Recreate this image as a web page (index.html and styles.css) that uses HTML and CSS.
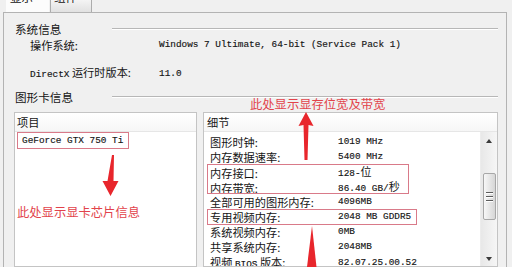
FILE: index.html
```html
<!DOCTYPE html>
<html lang="zh-CN">
<head>
<meta charset="utf-8">
<title>系统信息</title>
<link rel="stylesheet" href="styles.css">
</head>
<body>
<div class="tabs">
  <div class="tab active"><span>显示</span></div>
  <div class="tab inactive"><span>组件</span></div>
</div>
<div class="panel">
  <div class="gtitle g1"><span>系统信息</span></div>
  <div class="kv kv1"><span>操作系统:</span><span class="m">Windows 7 Ultimate, 64-bit (Service Pack 1)</span></div>
  <div class="kv kv2"><span><span class="m">DirectX</span> 运行时版本:</span><span class="m">11.0</span></div>
  <div class="gtitle g2"><span>图形卡信息</span></div>
  <div class="lists">
    <div class="list left">
      <div class="lhead">项目</div>
      <div class="lbody">
        <div class="item m">GeForce GTX 750 Ti</div>
      </div>
    </div>
    <div class="list right">
      <div class="lhead">细节</div>
      <div class="rbody">
        <div class="rows">
          <div class="drow"><span>图形时钟:</span><span class="m">1019 MHz</span></div>
          <div class="drow"><span>内存数据速率:</span><span class="m">5400 MHz</span></div>
          <div class="hl hl1">
            <div class="drow"><span>内存接口:</span><span class="m">128-<span class="c">位</span></span></div>
            <div class="drow"><span>内存带宽:</span><span class="m">86.40 GB/<span class="c">秒</span></span></div>
          </div>
          <div class="drow"><span>全部可用的图形内存:</span><span class="m">4096MB</span></div>
          <div class="hl hl2">
            <div class="drow"><span>专用视频内存:</span><span class="m">2048 MB GDDR5</span></div>
          </div>
          <div class="drow"><span>系统视频内存:</span><span class="m">0MB</span></div>
          <div class="drow"><span>共享系统内存:</span><span class="m">2048MB</span></div>
          <div class="drow"><span>视频 <span class="m">BIOS</span> 版本:</span><span class="m">82.07.25.00.52</span></div>
        </div>
        <div class="sb">
          <div class="sbbtn"><i class="tri up"></i></div>
          <div class="thumb"><i></i><i></i><i></i></div>
          <div class="sbbtn down"><i class="tri dn"></i></div>
        </div>
      </div>
    </div>
  </div>
</div>
<div class="note note-top">此处显示显存位宽及带宽</div>
<div class="note note-left">此处显示显卡芯片信息</div>
<svg class="arrows" width="512" height="267" viewBox="0 0 512 267">
  <polygon points="306,112 313.5,126 308.5,125 307.5,160 304.5,160 303.5,125 298.5,126"/>
  <polygon points="112,155 114,155 113.5,181 118.5,181 110.5,196 102.5,181 107.5,181"/>
  <polygon points="312,226 316.5,267 307,267"/>
</svg>
</body>
</html>
```
FILE: styles.css
```css
html, body {
  margin: 0;
  padding: 0;
}
body {
  width: 512px;
  height: 267px;
  overflow: hidden;
  position: relative;
  background: #f0f0f0;
  font-family: "Noto Sans CJK SC", sans-serif;
  font-size: 11.2px;
  color: #141414;
}
.m {
  font-family: "Liberation Mono", "Noto Sans CJK SC", monospace;
  font-size: 9.4px;
  -webkit-text-stroke: 0.15px #141414;
}
.c {
  font-family: "Noto Sans CJK SC", sans-serif;
  font-size: 11px;
  -webkit-text-stroke: 0;
}
.tabs {
  display: flex;
  height: 12px;
  overflow: hidden;
  padding-left: 6px;
}
.tab {
  box-sizing: border-box;
  line-height: 14px;
  font-size: 11.5px;
}
.tab span {
  display: block;
  margin-top: -10px;
}
.tab.active {
  width: 43px;
  padding-left: 4px;
  background: #fcfcfc;
}
.tab.inactive {
  width: 42px;
  margin-left: 1px;
  padding-left: 3px;
  background: linear-gradient(#f4f4f4, #e1e1e1);
  border-left: 1px solid #acacac;
  border-right: 1px solid #acacac;
}
.panel {
  margin-left: 3px;
  width: 504px;
  height: 255px;
  box-sizing: border-box;
  border: 1px solid #b3b3b3;
  border-bottom: none;
}
.gtitle {
  display: grid;
  grid-template-columns: 97px 1fr;
  align-items: center;
  height: 14px;
  line-height: 14px;
  padding-left: 11px;
  margin-right: 8px;
  font-size: 11.6px;
}
.gtitle::after {
  content: "";
  border-top: 1px solid #b7b7b7;
  border-bottom: 1px solid #ffffff;
}
.g1 { margin-top: 9px; }
.g2 { margin-top: 11px; }
.kv {
  display: grid;
  grid-template-columns: 129px 1fr;
  align-items: center;
  height: 14px;
  line-height: 14px;
  padding-left: 26px;
}
.kv1 { margin-top: 2px; }
.kv2 { margin-top: 13px; }
.lists {
  display: flex;
  gap: 6px;
  margin: 8px 8px 0 10px;
}
.list {
  box-sizing: border-box;
  height: 155px;
  border: 1px solid #c4c4c4;
  background: #ffffff;
  overflow: hidden;
}
.list.left { width: 183px; }
.list.right { flex: 1; }
.lhead {
  box-sizing: border-box;
  height: 19px;
  line-height: 18px;
  padding-left: 2px;
  border-bottom: 1px solid #e6e6e6;
  background: linear-gradient(#ffffff, #f6f6f6);
}
.list.right .lhead { padding-left: 3px; }
.item {
  box-sizing: border-box;
  margin-left: 2px;
  width: 112px;
  height: 17px;
  line-height: 17px;
  padding-left: 5px;
  outline: 1px solid #d97a89;
  outline-offset: -1px;
}
.rbody {
  display: flex;
  height: 134px;
  overflow: hidden;
}
.rows {
  flex: 1;
  padding-top: 2px;
}
.drow {
  display: grid;
  grid-template-columns: 128px 1fr;
  align-items: center;
  height: 15.1px;
  line-height: 14px;
  padding-left: 6px;
  white-space: nowrap;
}
.hl {
  margin-left: 3px;
  outline: 1px solid #d97a89;
  outline-offset: -1px;
}
.hl .drow { padding-left: 3px; }
.hl1 { width: 202px; }
.hl2 { width: 210px; }
.sb {
  width: 16px;
  display: flex;
  flex-direction: column;
  align-items: center;
  background: linear-gradient(90deg, #e8e8e8, #f6f6f6);
  border-left: 1px solid #ececec;
}
.sbbtn {
  height: 17px;
  width: 100%;
  flex: none;
  display: flex;
  align-items: center;
  justify-content: center;
}
.sbbtn.down {
  margin-top: 31px;
  height: 15px;
}
.tri {
  width: 0;
  height: 0;
  border-left: 3.5px solid transparent;
  border-right: 3.5px solid transparent;
}
.tri.up { border-bottom: 4px solid #3a3a3a; }
.tri.dn { border-top: 4px solid #3a3a3a; }
.thumb {
  flex: none;
  box-sizing: border-box;
  margin-top: 24px;
  width: 13px;
  height: 47px;
  border: 1px solid #a7a7a7;
  border-radius: 2px;
  background: linear-gradient(90deg, #f7f7f7, #e3e3e3 60%, #d6d6d6);
  display: flex;
  flex-direction: column;
  align-items: center;
  justify-content: center;
  gap: 2px;
}
.thumb i {
  display: block;
  width: 7px;
  height: 1px;
  background: #5c5c5c;
  border-bottom: 1px solid #ffffff;
}
.note {
  position: absolute;
  color: #e2434b;
  font-size: 12.3px;
  line-height: 15px;
  white-space: nowrap;
}
.note-top { left: 250px; top: 97px; }
.note-left { left: 17px; top: 205px; }
.arrows {
  position: absolute;
  left: 0;
  top: 0;
  pointer-events: none;
  fill: #e8262c;
}
```
